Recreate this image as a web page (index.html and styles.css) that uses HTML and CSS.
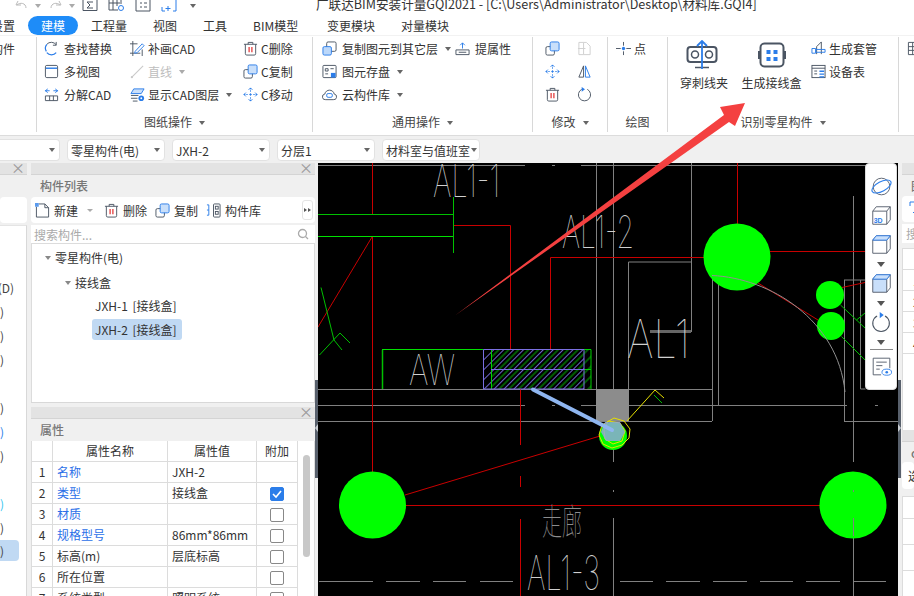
FILE: index.html
```html
<!DOCTYPE html>
<html lang="zh-CN">
<head>
  <meta charset="UTF-8">
  <title>广联达BIM安装计量GQI2021</title>
  <link rel="stylesheet" href="styles.css">
</head>
<body>
<div class="app">

  <!-- title bar, cut off at the top of the window -->
  <div class="titlebar">
    <div class="quick">
      <svg width="13" height="12" viewBox="0 0 13 12"><path d="M3 1 1 5h5M2 5c3-3 9-2 9 3" fill="none" stroke="#bbb"/></svg>
      <i class="caret gray"></i>
      <svg class="q-redo" width="13" height="12" viewBox="0 0 13 12"><path d="M10 1l2 4H7M11 5C8 2 2 3 2 8" fill="none" stroke="#bbb"/></svg>
      <i class="caret gray"></i>
      <svg class="q-sum" width="16" height="12" viewBox="0 0 16 12"><path d="M1 0v10.500h14V0M11 2H5l3 3-3 3h6" fill="none" stroke="#4b5563"/></svg>
      <svg class="q-next" width="17" height="12" viewBox="0 0 17 12"><path d="M1 0v10h9M1 3h11M5 0v10M9 0v6M13 0v4" fill="none" stroke="#4b5563"/><circle cx="13" cy="8" r="2.500" fill="none" stroke="#2b7de9"/></svg>
      <svg class="q-next" width="16" height="12" viewBox="0 0 16 12"><path d="M1 0v11h14V0M5 3h2M9 3h3M5 7h2M9 7h3" fill="none" stroke="#4b5563"/></svg>
      <svg class="q-next" width="16" height="12" viewBox="0 0 16 12"><path d="M1 7v4h3M12 11h3V0M7 6v5M4.500 8.500h5" fill="none" stroke="#2b7de9"/></svg>
      <i class="caret q-end"></i>
    </div>
    <div class="title">广联达BIM安装计量GQI2021 - [C:\Users\Administrator\Desktop\材料库.GQI4]</div>
  </div>

  <!-- tabs -->
  <div class="tabs">
    <span class="tab tab-first"><span class="tab-cut">设置</span></span>
    <span class="tab tab-on">建模</span>
    <span class="tab t1">工程量</span>
    <span class="tab t2">视图</span>
    <span class="tab t3">工具</span>
    <span class="tab t4">BIM模型</span>
    <span class="tab t5">变更模块</span>
    <span class="tab t6">对量模块</span>
  </div>

  <!-- ribbon -->
  <div class="ribbon">
    <div class="grp g0"><div class="tool cut"><span>构件</span></div></div>

    <div class="grp g1">
      <div class="grp-body">
        <div class="col w86">
          <div class="tool">
            <svg class="ico" viewBox="0 0 16 16"><path d="M13 4A6.500 6.500 0 0 0 3 3.500" fill="none" stroke="#4b5563"/><path d="M3 12.500A6.500 6.500 0 0 0 13 12.500M2.500 11A6.500 6.500 0 0 1 3 3.500" fill="none" stroke="#2b7de9" stroke-width="1.300"/><path d="M13 1v3.500H9.500" fill="none" stroke="#4b5563"/></svg>
            <span>查找替换</span>
          </div>
          <div class="tool">
            <svg class="ico" viewBox="0 0 16 16"><rect x="1.500" y="1.500" width="13" height="13" rx="1.500" fill="none" stroke="#4b5563"/><path d="M2 4.500h12" stroke="#2b7de9" stroke-width="1.500"/></svg>
            <span>多视图</span>
          </div>
          <div class="tool">
            <svg class="ico" viewBox="0 0 16 16"><path d="M1.500 9.500h13v5h-13zM6 9.500v5M10 9.500v5" fill="none" stroke="#4b5563"/><path d="M1 4h5M4 2 1.500 4 4 6M15 4h-5M12 2l2.500 2L12 6" fill="none" stroke="#2b7de9"/></svg>
            <span>分解CAD</span>
          </div>
        </div>
        <div class="col w113">
          <div class="tool">
            <svg class="ico" viewBox="0 0 16 16"><path d="M3 0v16M0 13h11M0 3h8M13 9v7" fill="none" stroke="#4b5563"/><path d="M5.500 11 13 3l2 2-7.500 7.500-2.500.5z" fill="#fff" stroke="#2b7de9"/></svg>
            <span class="tx-close">补画CAD</span>
          </div>
          <div class="tool off">
            <svg class="ico" viewBox="0 0 16 16"><path d="M2 14 14 2" stroke="#c9c9c9" stroke-width="1.200"/><circle cx="2" cy="14" r="1.200" fill="#c9c9c9"/></svg>
            <span class="tx-close">直线</span><i class="caret gray"></i>
          </div>
          <div class="tool">
            <svg class="ico" viewBox="0 0 16 16"><path d="M4 2h11l-3 5H1z" fill="#c9dffa" stroke="#2b7de9"/><path d="M1 9h8M1 12h7M3 15h5" stroke="#4b5563" fill="none"/><circle cx="12" cy="12" r="3" fill="#2b7de9"/><circle cx="12" cy="12" r="1" fill="#fff"/></svg>
            <span class="tx-close">显示CAD图层</span><i class="caret"></i>
          </div>
        </div>
        <div class="col">
          <div class="tool">
            <svg class="ico" viewBox="0 0 16 16"><path d="M2.500 3.500v10a1.500 1.500 0 0 0 1.500 1.500h8a1.500 1.500 0 0 0 1.500-1.500v-10M1 3.500h14M5.500 3.500V1.500h5v2" fill="none" stroke="#4b5563"/><path d="M6.500 6.500v5.500M9.500 6.500v5.500" stroke="#e02020" stroke-width="1.200"/></svg>
            <span class="tx-close">C删除</span>
          </div>
          <div class="tool">
            <svg class="ico" viewBox="0 0 16 16"><use href="#copy"/></svg>
            <span class="tx-close">C复制</span>
          </div>
          <div class="tool">
            <svg class="ico" viewBox="0 0 16 16"><use href="#move"/></svg>
            <span class="tx-close">C移动</span>
          </div>
        </div>
      </div>
      <div class="grp-label">图纸操作<i class="caret"></i></div>
    </div>

    <div class="grp g2">
      <div class="grp-body">
        <div class="col w134">
          <div class="tool">
            <svg class="ico" viewBox="0 0 16 16"><rect x="5" y="1" width="10" height="10" rx="1.500" fill="#fff" stroke="#4b5563"/><rect x="1" y="6" width="9" height="9" rx="1.500" fill="#bcd8fa" stroke="#2b7de9"/></svg>
            <span>复制图元到其它层</span><i class="caret"></i>
          </div>
          <div class="tool">
            <svg class="ico" viewBox="0 0 16 16"><rect x="1" y="1.500" width="14" height="13" rx="1" fill="none" stroke="#4b5563"/><path d="M3.500 5h3v2.500h-3zM9 5h3.500M3.500 10.500h3" fill="none" stroke="#4b5563"/><rect x="9.500" y="9.500" width="5" height="5" fill="#2b7de9"/></svg>
            <span>图元存盘</span><i class="caret"></i>
          </div>
          <div class="tool">
            <svg class="ico" viewBox="0 0 16 16"><path d="M4 13.500a3 3 0 0 1-1-6C4 2 12 2 13 7.500a3 3 0 0 1-1 6z" fill="none" stroke="#4b5563"/><rect x="5" y="7" width="6" height="4" rx="1.500" fill="none" stroke="#2b7de9"/></svg>
            <span>云构件库</span><i class="caret"></i>
          </div>
        </div>
        <div class="col">
          <div class="tool">
            <svg class="ico" viewBox="0 0 16 16"><path d="M1 9.500h14v5H1zM4 12h8" fill="none" stroke="#4b5563"/><path d="M8 8V2M5.500 4.500 8 2l2.500 2.500" fill="none" stroke="#2b7de9"/></svg>
            <span>提属性</span>
          </div>
        </div>
      </div>
      <div class="grp-label">通用操作<i class="caret"></i></div>
    </div>

    <div class="grp g3">
      <div class="grp-body">
        <div class="col w32">
          <div class="tool"><svg class="ico" viewBox="0 0 16 16"><use href="#copy"/></svg></div>
          <div class="tool"><svg class="ico" viewBox="0 0 16 16"><use href="#move"/></svg></div>
          <div class="tool"><svg class="ico" viewBox="0 0 16 16"><path d="M2.500 3.500v10a1.500 1.500 0 0 0 1.500 1.500h8a1.500 1.500 0 0 0 1.500-1.500v-10M1 3.500h14M5.500 3.500V1.500h5v2" fill="none" stroke="#4b5563"/><path d="M6.500 6.500v5.500M9.500 6.500v5.500" stroke="#e02020" stroke-width="1.200"/></svg></div>
        </div>
        <div class="col">
          <div class="tool"><svg class="ico" viewBox="0 0 16 16"><path d="M2 1.500h5v13H2zM7 1.500h3l4 4v9H7M1 8h8" fill="none" stroke="#cfcfcf"/></svg></div>
          <div class="tool"><svg class="ico" viewBox="0 0 16 16"><path d="M7 2 2 14h5z" fill="none" stroke="#4b5563"/><path d="M9 2l5 12H9z" fill="none" stroke="#2b7de9"/></svg></div>
          <div class="tool"><svg class="ico" viewBox="0 0 16 16"><path d="M11 2.500A6.500 6.500 0 1 1 5 2.500" fill="none" stroke="#4b5563"/><path d="M5 0v5l3.500-2.500z" fill="#2b7de9"/></svg></div>
        </div>
      </div>
      <div class="grp-label">修改<i class="caret"></i></div>
    </div>

    <div class="grp g4">
      <div class="grp-body">
        <div class="tool">
          <svg class="ico" viewBox="0 0 16 16"><path d="M0 8h5M11 8h5M8 1v4M8 11v4" stroke="#4b5563"/><circle cx="8" cy="8" r="1.800" fill="#2b7de9"/></svg>
          <span class="tx-close">点</span>
        </div>
      </div>
      <div class="grp-label">绘图</div>
    </div>

    <div class="grp g5">
      <div class="grp-body">
        <div class="big big1">
          <svg class="big1-ico" width="32" height="30" viewBox="0 0 32 30"><rect x="1.500" y="7" width="29" height="15" rx="3" fill="none" stroke="#4b5563" stroke-width="2"/><circle cx="9" cy="14.500" r="3.500" fill="none" stroke="#4b5563" stroke-width="1.500"/><circle cx="23" cy="14.500" r="3.500" fill="none" stroke="#4b5563" stroke-width="1.500"/><path d="M9 27.500h14" stroke="#4b5563" stroke-width="1.500"/><path d="M16 29V2M11 6l5-5 5 5" fill="none" stroke="#2b7de9" stroke-width="1.800"/></svg>
          <span>穿刺线夹</span>
        </div>
        <div class="big big2">
          <svg width="32" height="30" viewBox="0 0 32 30"><rect x="4.500" y="3.500" width="23" height="23" rx="4" fill="none" stroke="#4b5563" stroke-width="2"/><path d="M3 11v8M29 11v8" stroke="#4b5563" stroke-width="2"/><path d="M10.500 10h4v4h-4zM17.500 10h4v4h-4zM10.500 17h4v4h-4zM17.500 17h4v4h-4z" fill="#2b7de9"/></svg>
          <span>生成接线盒</span>
        </div>
        <div class="col">
          <div class="tool">
            <svg class="ico" viewBox="0 0 16 16"><path d="M6 14V6l5-5v13" fill="none" stroke="#4b5563"/><path d="M1 8h4v5H1zM5 9h10v3H5z" fill="none" stroke="#2b7de9"/></svg>
            <span class="tx-close">生成套管</span>
          </div>
          <div class="tool">
            <svg class="ico" viewBox="0 0 16 16"><rect x="1" y="1.500" width="14" height="13" fill="none" stroke="#4b5563"/><path d="M1 4.500h14" stroke="#4b5563"/><path d="M3.500 7.500h3M3.500 10.500h3" stroke="#4b5563"/><path d="M9 7h5v1.500H9zM9 10h5v1.500H9zM9 13h5v1.500H9z" fill="#2b7de9"/></svg>
            <span class="tx-close">设备表</span>
          </div>
        </div>
      </div>
      <div class="grp-label">识别零星构件<i class="caret"></i></div>
    </div>

    <div class="grp g6">
      <div class="tool"><svg class="ico" viewBox="0 0 16 16"><path d="M1.500 1.500h14v13h-14zM1.500 6h14M1.500 10h14M6 1.500v13" fill="none" stroke="#4b5563"/></svg></div>
    </div>
  </div>

  <!-- selector row -->
  <div class="selectors">
    <div class="sel s0"><i class="caret"></i></div>
    <div class="sel"><span>零星构件(电)</span><i class="caret"></i></div>
    <div class="sel"><span>JXH-2</span><i class="caret"></i></div>
    <div class="sel"><span>分层1</span><i class="caret"></i></div>
    <div class="sel s4"><span>材料室与值班室</span><i class="caret"></i></div>
  </div>

  <div class="main">

    <!-- left panel, mostly off screen -->
    <div class="side-left">
      <div class="p-head"><span class="x">×</span></div>
      <div class="p-title"></div>
      <div class="card side-bar"></div>
      <div class="side-list">
        <div class="sl-row r-d">(D)</div>
        <div class="sl-row">)</div>
        <div class="sl-row">)</div>
        <div class="sl-row">)</div>
        <div class="sl-row gap-b">)</div>
        <div class="sl-row blue">)</div>
        <div class="sl-row">)</div>
        <div class="sl-row gap-b cyan">)</div>
        <div class="sl-row">)</div>
        <div class="sl-row on">)</div>
      </div>
    </div>

    <!-- component list + properties -->
    <div class="middle">
      <div class="panel list-panel">
        <div class="p-head"><span class="x">×</span></div>
        <div class="p-title">构件列表</div>
        <div class="card bar">
          <div class="bar-item">
            <svg class="ico" viewBox="0 0 16 16"><path d="M1.500 4v11h13V5l-4-4H4" fill="none" stroke="#4b5563"/><path d="M10.500 1v4h4" fill="none" stroke="#4b5563"/><path d="M0 0h4v4H0z" fill="#5b9bee"/></svg>
            <span>新建</span><i class="caret gray"></i>
          </div>
          <div class="bar-item">
            <svg class="ico" viewBox="0 0 16 16"><path d="M2.500 3.500v10a1.500 1.500 0 0 0 1.500 1.500h8a1.500 1.500 0 0 0 1.500-1.500v-10M1 3.500h14M5.500 3.500V1.500h5v2" fill="none" stroke="#4b5563"/><path d="M6.500 6.500v5.500M9.500 6.500v5.500" stroke="#e02020" stroke-width="1.200"/></svg>
            <span>删除</span>
          </div>
          <div class="bar-item">
            <svg class="ico" viewBox="0 0 16 16"><use href="#copy"/></svg>
            <span>复制</span>
          </div>
          <div class="bar-item">
            <svg class="ico" viewBox="0 0 16 16"><path d="M1 2h2M1 7.500h2M1 13h2M3 2v11" fill="none" stroke="#2b7de9"/><rect x="8" y="1" width="7" height="14" rx="1" fill="none" stroke="#4b5563"/><rect x="10" y="3.500" width="3" height="3" fill="none" stroke="#4b5563"/><rect x="10" y="9" width="3" height="3" fill="none" stroke="#4b5563"/></svg>
            <span>构件库</span>
          </div>
          <div class="bar-more"><i></i><i></i></div>
        </div>
        <div class="search">
          <span>搜索构件...</span>
          <svg width="12" height="12" viewBox="0 0 12 12"><circle cx="5.500" cy="5.500" r="4" fill="none" stroke="#aaa" stroke-width="1.300"/><path d="M8.500 8.500 11 11" stroke="#aaa" stroke-width="1.300"/></svg>
        </div>
        <div class="tree">
          <div class="node n1"><i class="caret"></i>零星构件(电)</div>
          <div class="node n2"><i class="caret"></i>接线盒</div>
          <div class="node n3"><span>JXH-1 [接线盒]</span></div>
          <div class="node n3"><span class="sel-node">JXH-2 [接线盒]</span></div>
        </div>
      </div>

      <div class="panel prop-panel">
        <div class="p-head"><span class="x">×</span></div>
        <div class="p-title">属性</div>
        <div class="prop-wrap">
          <table class="props">
            <colgroup><col class="c1"><col class="c2"><col class="c3"><col class="c4"></colgroup>
            <tr><th></th><th>属性名称</th><th>属性值</th><th>附加</th></tr>
            <tr><td class="num">1</td><td class="link">名称</td><td>JXH-2</td><td></td></tr>
            <tr><td class="num">2</td><td class="link">类型</td><td>接线盒</td><td><b class="chk on"><svg width="14" height="14" viewBox="0 0 14 14"><path d="M3 7l3 3 5-6" fill="none" stroke="#fff" stroke-width="1.600"/></svg></b></td></tr>
            <tr><td class="num">3</td><td class="link">材质</td><td></td><td><b class="chk"></b></td></tr>
            <tr><td class="num">4</td><td class="link">规格型号</td><td>86mm*86mm</td><td><b class="chk"></b></td></tr>
            <tr><td class="num">5</td><td>标高(m)</td><td>层底标高</td><td><b class="chk"></b></td></tr>
            <tr><td class="num">6</td><td>所在位置</td><td></td><td><b class="chk"></b></td></tr>
            <tr><td class="num">7</td><td>系统类型</td><td>照明系统</td><td><b class="chk"></b></td></tr>
          </table>
          <div class="scroll"><div class="thumb"></div></div>
        </div>
      </div>
    </div>

    <div class="split"><div class="split-mark"></div></div>

    <!-- CAD drawing -->
    <div class="canvas">
      <svg class="cad" width="580" height="433" viewBox="318 163 580 433">
        <defs>
          <pattern id="hatch-p" width="7" height="7" patternUnits="userSpaceOnUse" patternTransform="rotate(45)">
            <path d="M1.500 0v7" stroke="#7a6fe0" stroke-width=".9"/>
          </pattern>
          <pattern id="hatch-g" width="7" height="7" patternUnits="userSpaceOnUse" patternTransform="rotate(45)">
            <path d="M5 0v7" stroke="#00c800" stroke-width=".9"/>
          </pattern>
        </defs>

        <g fill="none" stroke="#808080">
          <path d="M318 165.500h207M552 165.500h3M581 165.500h287"/>
          <path d="M596.500 163v226M613.500 163v258M691.500 163v169M628.500 262h63M628.500 262v159"/>
          <path d="M318 389.500h394M318 405.500h207M552 405.500h3M581 405.500h266M875 405.500h3M318 421.500h394M844 421.500h54"/>
          <path d="M712.500 275v146M718.500 275v130M844.500 280v141M844 280h24M853.500 196v266M853.500 518v78M860.500 280v109h5"/>
          <path d="M613.500 449v13M613.500 490v2M613.500 518v78"/>
          <path d="M319 581.500h54M386 581.500h34M433 581.500h33M480 581.500h33M620 581.500h33M666 581.500h34M713 581.500h34M760 581.500h33M806 581.500h34M853 581.500h33"/>
        </g>
        <path d="M650 331.500h41" stroke="#666" stroke-width="3"/>

        <g fill="none" stroke="#c80000">
          <path d="M372.500 163v51M372.500 237v235M372 237l-54 90"/>
          <path d="M453 225.500h57.500v124M550.500 349v-91.500H704M737.500 163v61M770 251.500h95"/>
          <path d="M405 495 600 436M405 505.500h415"/>
          <path d="M520.500 389v56M520.500 476v11M520.500 519v77"/>
          <path d="M758 283l60 37M842 287.500l23-5"/>
        </g>

        <g fill="none" stroke="#00c000">
          <path d="M318 214.500h135M453.500 197v56"/>
          <path d="M321 287.500 334 340M319.500 355 340 333l10 10M334 340l8 10"/>
          <path d="M840.500 305l24.500 23M841.500 336.500l23.500 23.500M856.500 320l8.500-7"/>
          <path d="M382.500 389V350" stroke-width="1.500"/>
        </g>
        <path d="M318 236.500h135M382 349.500h101" stroke="#00e000" fill="none"/>

        <rect x="483" y="349.500" width="101" height="39.500" fill="url(#hatch-p)"/>
        <rect x="491" y="349.500" width="100" height="39.500" fill="url(#hatch-g)"/>
        <g fill="none">
          <path d="M491.500 349.500V389M591 349.500V389M584 369.500h7M584 349.500h7" stroke="#00d000"/>
          <path d="M483.500 389V349.500h100.500V389M491 369.500h93M483 389h101" stroke="#7a6fe0"/>
        </g>

        <rect x="596" y="389" width="33" height="32" fill="#8c8c8c"/>

        <circle cx="372.500" cy="505" r="33.500" fill="#0f0"/>
        <circle cx="737" cy="257" r="33.500" fill="#0f0"/>
        <circle cx="853" cy="505" r="33.500" fill="#0f0"/>
        <circle cx="830" cy="295" r="14" fill="#0f0"/>
        <circle cx="831" cy="326" r="14" fill="#0f0"/>
        <circle cx="613" cy="436" r="14" fill="#0f0"/>
        <path d="M853.500 490v2M853.500 518v18" stroke="#808080"/>
        <path d="M712 275.500C770 278 838 320 845 392" fill="none" stroke="#909090"/>

        <g fill="none" stroke="#e6e000">
          <path d="M627 421l28-31 9 8M614 418l10 3 6 8-1 9-7 7-10 3-9-4-4-9 3-10z"/>
          <path d="M608 421l12 2 5 8-3 10-9 3-8-5-1-9z"/>
        </g>
        <path d="M654 395l8 8" stroke="#00c000"/>
        <path d="M605 422h15l5 10-5 9h-14l-5-9z" fill="#8fa8d8" opacity=".85"/>
        <path d="M533 389.500 612 430" stroke="#8fb6f0" stroke-width="4" stroke-linecap="round"/>

        <g class="cad-text">
          <text x="433" y="197" font-size="45" textLength="67" lengthAdjust="spacingAndGlyphs">AL1-1</text>
          <text x="562" y="248" font-size="45" textLength="72" lengthAdjust="spacingAndGlyphs">AL1-2</text>
          <text x="627" y="358" font-size="53" textLength="63" lengthAdjust="spacingAndGlyphs">AL1</text>
          <text x="409" y="385" font-size="42" textLength="46" lengthAdjust="spacingAndGlyphs">AW</text>
          <text x="527" y="590" font-size="48" textLength="73" lengthAdjust="spacingAndGlyphs">AL1-3</text>
          <text x="542" y="535" font-size="36" textLength="40" lengthAdjust="spacingAndGlyphs" class="dim">走廊</text>
        </g>
      </svg>

      <!-- view tools floating over the drawing -->
      <div class="viewbar">
        <svg class="v-ico" viewBox="0 0 24 24"><circle cx="12" cy="12" r="9.500" fill="none" stroke="#4b5563"/><ellipse cx="12" cy="12" rx="12" ry="5.500" transform="rotate(-28 12 12)" fill="none" stroke="#2b7de9" stroke-width="1.300"/></svg>
        <svg class="v-ico" viewBox="0 0 24 24"><use href="#cube"/><text x="3" y="20.500" class="v3d">3D</text></svg>
        <svg class="v-ico" viewBox="0 0 24 24"><use href="#cube"/><path d="M2 7l4-5h16l-4 5z" fill="#c9dffa" stroke="#2b7de9"/></svg>
        <i class="v-caret"></i>
        <svg class="v-ico" viewBox="0 0 24 24"><path d="M2 7h16v15H2z" fill="#c9dffa"/><use href="#cube"/><path d="M2 7l4-5h16l-4 5z" fill="#c9dffa" stroke="#2b7de9"/></svg>
        <i class="v-caret"></i>
        <svg class="v-ico" viewBox="0 0 24 24"><path d="M16 4.500A9.500 9.500 0 1 1 7 4.500" fill="none" stroke="#4b5563" stroke-width="1.200"/><path d="M10 0v7l4.500-3.500z" fill="#2b7de9"/></svg>
        <i class="v-caret last"></i>
        <div class="v-line"></div>
        <svg class="v-ico" viewBox="0 0 24 24"><path d="M21.500 14V2.500h-19v19h9" fill="none" stroke="#4b5563"/><path d="M6 7h12M6 11h7M6 15h4" stroke="#4b5563"/><ellipse cx="18" cy="18.500" rx="5.500" ry="3.500" fill="#fff" stroke="#2b7de9"/><circle cx="18" cy="18.500" r="1.500" fill="#2b7de9"/></svg>
      </div>
    </div>

    <div class="split right"><div class="split-mark"></div></div>

    <!-- right panel, mostly off screen -->
    <div class="side-right">
      <div class="p-head"></div>
      <div class="p-title">图</div>
      <div class="card r-bar"><svg width="14" height="14" viewBox="0 0 14 14"><path d="M1 5V1h8M7 9v5M4 11.500h6" fill="none" stroke="#2b7de9"/></svg></div>
      <div class="r-search">搜</div>
      <div class="r-table">
        <div class="r-row"></div>
        <div class="r-row">1</div>
        <div class="r-row">2</div>
        <div class="r-row">3</div>
        <div class="r-row">4</div>
      </div>
      <div class="r-lower">
        <div class="p-head"></div>
        <div class="p-title">o</div>
        <div class="card r-bar2">选</div>
        <div class="r-table2">
          <div class="r-row2"></div>
          <div class="r-row2"></div>
          <div class="r-row2"></div>
        </div>
      </div>
    </div>
  </div>

  <!-- annotation arrow drawn on top of the screenshot -->
  <svg class="arrow" width="914" height="596" viewBox="0 0 914 596">
    <path d="M455 315.500 724 115 720 107 745 103 735 126 729 122z" fill="#f44040"/>
  </svg>

  <!-- shared icons -->
  <svg class="defs" width="0" height="0">
    <defs>
      <g id="copy">
        <rect x="1" y="6" width="9" height="9" rx="1.500" fill="#fff" stroke="#4b5563"/>
        <rect x="5.500" y="1" width="9.500" height="9.500" rx="1.500" fill="#c9dffa" stroke="#2b7de9"/>
      </g>
      <g id="move" fill="none" stroke="#2b7de9">
        <path d="M8 1v4M8 11v4M1 8h4M11 8h4" stroke-dasharray="1.500 1"/>
        <path d="M6 3l2-2 2 2M6 13l2 2 2-2M3 6 1 8l2 2M13 6l2 2-2 2"/>
        <circle cx="8" cy="8" r=".8" fill="#2b7de9"/>
      </g>
      <g id="cube" fill="none" stroke="#4b5563">
        <path d="M2 7h16v15H2zM2 7l4-5h16v15l-4 5M18 7l4-5"/>
      </g>
    </defs>
  </svg>
</div>
</body>
</html>
```

FILE: styles.css
```css
* {
  box-sizing: border-box;
}

body {
  margin: 0;
  background: #f0f0f0;
  font-family: "Noto Sans CJK SC", "Noto Sans", sans-serif;
  font-size: 12px;
  color: #333;
}

.app {
  position: relative;
  width: 914px;
  height: 596px;
  overflow: hidden;
  display: flex;
  flex-direction: column;
}

.caret {
  display: inline-block;
  width: 0;
  height: 0;
  border-left: 3.5px solid transparent;
  border-right: 3.5px solid transparent;
  border-top: 4px solid #666;
}

.caret.gray {
  border-top-color: #aaa;
}

/* title bar */
.titlebar {
  height: 16px;
  background: #fff;
  overflow: hidden;
  display: flex;
}

.quick {
  width: 316px;
  height: 12px;
  padding-left: 15px;
  display: flex;
  align-items: flex-start;
}

.quick .caret {
  margin: 4px 0 0 7px;
}

.q-redo {
  margin-left: 8px;
}

.q-sum {
  margin-left: 7px;
}

.q-next {
  margin-left: 10px;
}

.q-end {
  margin-left: 13px !important;
}

.title {
  font-size: 12.6px;
  line-height: 16px;
  margin-top: -4px;
  white-space: nowrap;
}

/* tabs */
.tabs {
  height: 19px;
  background: #fff;
  display: flex;
  align-items: center;
  white-space: nowrap;
}

.tab {
  line-height: 19px;
  flex: none;
}

.tab-first {
  width: 28px;
  overflow: hidden;
}

.tab-cut {
  margin-left: -9px;
}

.tab-on {
  width: 50px;
  height: 19px;
  background: #1e8cf8;
  color: #fff;
  border-radius: 10px;
  text-align: center;
}

.t1 { margin-left: 13px; }
.t2 { margin-left: 26px; }
.t3 { margin-left: 26px; }
.t4 { margin-left: 26px; width: 48px; }
.t5 { margin-left: 26px; }
.t6 { margin-left: 26px; }

/* ribbon */
.ribbon {
  height: 101px;
  background: #fff;
  border-top: 1px solid #f2f2f2;
  border-bottom: 1px solid #dcdcdc;
  padding-top: 1px;
  display: flex;
  align-items: flex-start;
}

.grp {
  height: 95px;
  border-right: 1px solid #d8d8d8;
  display: flex;
  flex-direction: column;
  justify-content: space-between;
  flex: none;
}

.grp-body {
  display: flex;
}

.grp-label {
  height: 20px;
  line-height: 20px;
  color: #444;
  text-align: center;
}

.grp-label .caret {
  margin-left: 7px;
  vertical-align: 2px;
}

.g0 { width: 37px; overflow: hidden; }
.g1 { width: 276px; }
.g2 { width: 220px; }
.g3 { width: 75px; }
.g4 { width: 60px; }
.g5 { width: 231px; }
.g6 { width: 16px; border: none; padding-left: 8px; overflow: hidden; }

.g1 .grp-body { padding-left: 7px; }
.g2 .grp-body { padding-left: 9px; }
.g3 .grp-body { padding-left: 12px; }
.g4 .grp-body { padding-left: 8px; }
.g5 .grp-body { padding-left: 12px; }

.col {
  display: flex;
  flex-direction: column;
  flex: none;
}

.w32 { width: 32px; }
.w86 { width: 86px; }
.w113 { width: 113px; }
.w134 { width: 133px; }

.tool {
  height: 23px;
  display: flex;
  align-items: center;
  gap: 5px;
  white-space: nowrap;
}

.tool .caret {
  margin-left: 2px;
}

.tool.cut {
  width: 37px;
  margin-left: -9px;
}

.tool.off span {
  color: #bdbdbd;
}

.tx-close {
  margin-left: -2px;
}

.ico {
  width: 15px;
  height: 15px;
  flex: none;
}

.big {
  display: flex;
  flex-direction: column;
  align-items: center;
  padding-top: 3px;
  gap: 5px;
  white-space: nowrap;
  line-height: 16px;
}

.big1 {
  width: 48px;
}

.big1-ico {
  margin-left: -4px;
}

.big2 {
  width: 61px;
  margin-left: 13px;
  margin-right: 9px;
}

/* selector row */
.selectors {
  height: 27px;
  background: #f0f0f0;
  display: flex;
  align-items: center;
  gap: 7px;
  padding-top: 1px;
}

.sel {
  width: 98px;
  height: 22px;
  background: #fff;
  border: 1px solid #e2e2e2;
  border-radius: 4px;
  padding: 0 4px 0 3px;
  display: flex;
  align-items: center;
  justify-content: space-between;
  white-space: nowrap;
}

.s0 {
  width: 60px;
  border-left: none;
  border-radius: 0 4px 4px 0;
  justify-content: flex-end;
}

.s4 .caret {
  margin-left: 1px;
  border-left-width: 3px;
  border-right-width: 3px;
}

/* main area */
.main {
  flex: 1;
  min-height: 0;
  display: flex;
}

.p-head {
  height: 12px;
  background: #e3e3e3;
  border-bottom: 1px solid #d4d4d4;
  position: relative;
}

.x {
  position: absolute;
  right: 2px;
  top: -3px;
  font-size: 14px;
  line-height: 14px;
  color: #999;
}

.p-title {
  height: 22px;
  line-height: 21px;
  padding-left: 9px;
  color: #777;
  background: #f0f0f0;
  font-weight: 500;
}

.card {
  background: #fff;
  border-radius: 4px;
}

/* left side panel */
.side-left {
  width: 27px;
  margin-right: 4px;
  flex: none;
  display: flex;
  flex-direction: column;
}

.side-bar {
  height: 26px;
  margin-bottom: 2px;
}

.side-list {
  flex: 1;
  background: #fff;
  border-right: 1px solid #d8d8d8;
  border-top: 1px solid #e4e4e4;
  padding-top: 50px;
}

.sl-row {
  height: 24px;
  line-height: 24px;
  width: 19px;
  padding-right: 15px;
  white-space: nowrap;
  display: flex;
  justify-content: flex-end;
  color: #444;
}

.sl-row.r-d {
  padding-right: 5px;
}

.sl-row.gap-b {
  margin-top: 24px;
}

.sl-row.blue {
  color: #2b7de9;
}

.sl-row.cyan {
  color: #36c5f0;
}

.sl-row.on {
  height: 21px;
  line-height: 21px;
  background: #c0d9f3;
  border-radius: 0 4px 4px 0;
}

/* middle column */
.middle {
  width: 284px;
  flex: none;
  display: flex;
  flex-direction: column;
  gap: 4px;
}

.panel {
  background: #fff;
  display: flex;
  flex-direction: column;
}

.list-panel {
  height: 240px;
  background: #f0f0f0;
  border-bottom: 1px solid #d8d8d8;
}

.prop-panel {
  flex: 1;
  min-height: 0;
  overflow: hidden;
}

.bar {
  height: 26px;
  flex: none;
  padding-left: 4px;
  display: flex;
  align-items: center;
  position: relative;
}

.bar-item {
  display: flex;
  align-items: center;
  gap: 4px;
  margin-right: 8px;
  white-space: nowrap;
}

.bar-item .caret {
  margin-left: 5px;
  margin-right: 3px;
  border-left-width: 3px;
  border-right-width: 3px;
  border-top-width: 3px;
}

.bar-more {
  position: absolute;
  right: 2px;
  top: 3px;
  width: 11px;
  height: 20px;
  border: 1px solid #e4e4e4;
  border-radius: 3px;
  display: flex;
  align-items: center;
  justify-content: center;
}

.bar-more i {
  width: 0;
  height: 0;
  border-top: 2.5px solid transparent;
  border-bottom: 2.5px solid transparent;
  border-left: 3px solid #555;
  margin-right: 1px;
}

.search {
  height: 19px;
  margin-top: 2px;
  flex: none;
  background: #fff;
  border-bottom: 1px solid #dcdcdc;
  padding: 0 6px 0 3px;
  color: #aaa;
  display: flex;
  align-items: center;
  justify-content: space-between;
}

.tree {
  flex: 1;
  background: #fff;
  border-right: 1px solid #dcdcdc;
  border-left: 1px solid #dcdcdc;
  padding-top: 2px;
}

.node {
  height: 24px;
  line-height: 24px;
  display: flex;
  align-items: center;
  white-space: nowrap;
}

.node .caret {
  margin-right: 4px;
  border-top-color: #888;
}

.n1 { padding-left: 13px; }
.n2 { padding-left: 33px; height: 25px; margin-bottom: -2px; }
.n3 { padding-left: 60px; word-spacing: 2px; }

.n3 span {
  padding: 0 3px;
  line-height: 21px;
}

.sel-node {
  background: #c0d9f3;
  border-radius: 3px;
  padding-right: 5px !important;
}

.prop-wrap {
  display: flex;
  flex: 1;
  min-height: 0;
}

.props {
  width: 267px;
  height: 146px;
  table-layout: fixed;
  border-collapse: collapse;
  flex: none;
  border-left: 1px solid #dcdcdc;
}

.c1 { width: 21px; }
.c2 { width: 115px; }
.c3 { width: 89px; }
.c4 { width: 41px; }

.props th,
.props td {
  height: 21px;
  padding: 0 4px;
  border: 1px solid #dcdcdc;
  font-weight: 400;
  white-space: nowrap;
  overflow: hidden;
}

.props th {
  height: 20px;
  text-align: center;
  border-top: none;
}

.props td:last-child {
  text-align: center;
  padding: 0;
}

.num {
  text-align: center;
}

.link {
  color: #2b6fe8;
}

.chk {
  display: inline-block;
  width: 14px;
  height: 14px;
  border: 1px solid #888;
  border-radius: 2px;
  vertical-align: middle;
}

.chk.on {
  background: #2b7de9;
  border-color: #2b7de9;
}

.chk svg {
  display: block;
  margin: -1px;
}

.scroll {
  flex: 1;
  border-right: 1px solid #dcdcdc;
  padding: 14px 4px 0 5px;
}

.thumb {
  height: 102px;
  background: #c8c8c8;
  border-radius: 4px;
}

/* splitters */
.split {
  width: 3px;
  flex: none;
  background: #f0f0f0;
  padding-top: 217px;
}

.split-mark {
  height: 98px;
  background: #58606c;
  position: relative;
}

.split-mark::after {
  content: "";
  position: absolute;
  left: 0;
  top: 44px;
  border-top: 4px solid transparent;
  border-bottom: 4px solid transparent;
  border-right: 3px solid #c8ccd2;
}

.split.right {
  width: 4px;
}

.split.right .split-mark {
  width: 3px;
}

.split.right .split-mark::after {
  border-right: none;
  border-left: 3px solid #c8ccd2;
}

/* drawing */
.canvas {
  position: relative;
  width: 580px;
  flex: none;
  background: #000;
  overflow: hidden;
}

.cad {
  display: block;
}

.cad-text text {
  font-family: Inter, Roboto, sans-serif;
  font-weight: 100;
  fill: #d0d0d0;
}

.cad-text text.dim {
  font-family: "Noto Sans CJK SC", sans-serif;
  fill: #8c8c8c;
}

.viewbar {
  position: absolute;
  left: 547px;
  top: 0;
  width: 32px;
  height: 227px;
  background: #fff;
  border: 1px solid #ddd;
  border-radius: 4px;
  padding-top: 12px;
  display: flex;
  flex-direction: column;
  align-items: center;
}

.v-ico {
  width: 21px;
  height: 21px;
  flex: none;
  margin-bottom: 8px;
}

.v-caret {
  width: 0;
  height: 0;
  margin: -1px 0 6px;
  border-left: 4px solid transparent;
  border-right: 4px solid transparent;
  border-top: 5px solid #555;
  flex: none;
}

.v-caret.last {
  margin-bottom: 4px;
}

.v3d {
  font-family: "Liberation Sans", sans-serif;
  font-size: 8px;
  font-weight: 700;
  fill: #2b7de9;
}

.v-line {
  width: 23px;
  height: 1px;
  background: #888;
  margin-bottom: 6px;
  flex: none;
}

/* right side panel */
.side-right {
  flex: 1;
  min-width: 0;
  overflow: hidden;
  background: #f0f0f0;
  display: flex;
  flex-direction: column;
}

.r-bar {
  width: 30px;
  height: 26px;
  flex: none;
  padding: 5px 0 0 7px;
}

.r-search {
  height: 19px;
  margin-top: 2px;
  flex: none;
  background: #fff;
  color: #aaa;
  padding-left: 4px;
  line-height: 19px;
}

.r-table {
  height: 182px;
  flex: none;
  background: #fff;
  margin-top: 5px;
  border-top: 1px solid #dcdcdc;
  border-left: 1px solid #dcdcdc;
}

.r-row {
  height: 21px;
  line-height: 21px;
  padding-left: 10px;
  border-bottom: 1px solid #dcdcdc;
}

.r-lower {
  flex: 1;
}

.r-lower .p-title {
  height: 20px;
}

.r-bar2 {
  height: 27px;
  padding-left: 6px;
  line-height: 27px;
}

.r-table2 {
  margin-top: 7px;
  padding-top: 21px;
  background: #fff;
  border-top: 1px solid #dcdcdc;
  border-left: 1px solid #dcdcdc;
  height: 100px;
}

.r-row2 {
  height: 26px;
  border-top: 1px solid #dcdcdc;
}

/* arrow + hidden defs */
.arrow {
  position: absolute;
  left: 0;
  top: 0;
  pointer-events: none;
}

.defs {
  position: absolute;
}
```
